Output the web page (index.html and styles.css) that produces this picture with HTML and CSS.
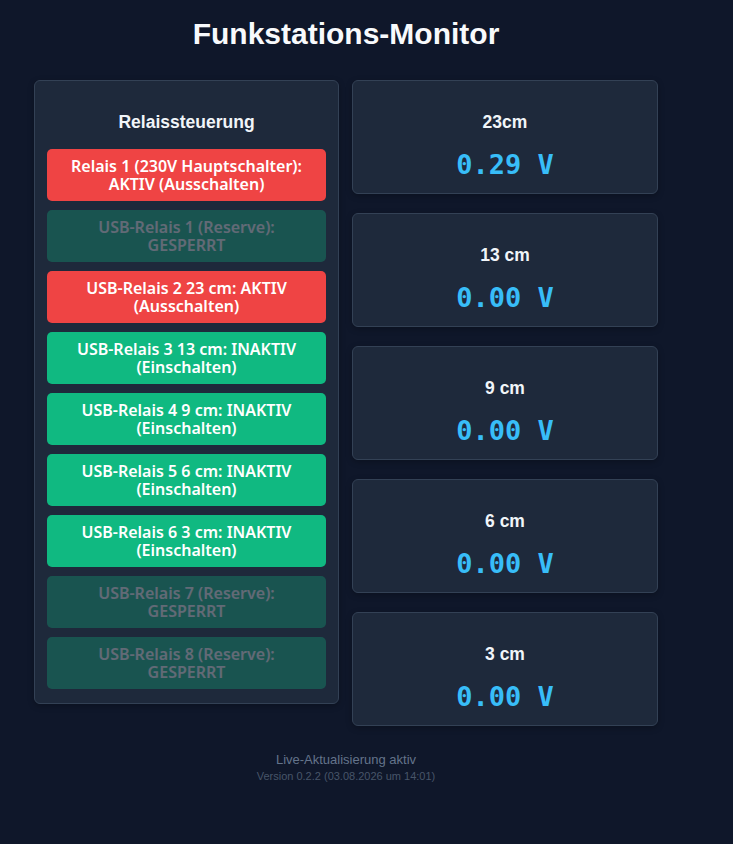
FILE: index.html
```html
<!DOCTYPE html>
<html lang="de">
<head>
<meta charset="utf-8">
<title>Funkstations-Monitor</title>
<link rel="stylesheet" href="styles.css">
</head>
<body>
<div class="page">
  <h1 class="title">Funkstations-Monitor</h1>
  <div class="grid">
    <section class="card relays">
      <h2 class="card-title">Relaissteuerung</h2>
      <div class="btn-list">
        <button class="btn btn-on">Relais 1 (230V Hauptschalter): AKTIV (Ausschalten)</button>
        <button class="btn btn-off btn-locked">USB-Relais 1 (Reserve): GESPERRT</button>
        <button class="btn btn-on">USB-Relais 2 23 cm: AKTIV (Ausschalten)</button>
        <button class="btn btn-off">USB-Relais 3 13 cm: INAKTIV (Einschalten)</button>
        <button class="btn btn-off">USB-Relais 4 9 cm: INAKTIV (Einschalten)</button>
        <button class="btn btn-off">USB-Relais 5 6 cm: INAKTIV (Einschalten)</button>
        <button class="btn btn-off">USB-Relais 6 3 cm: INAKTIV (Einschalten)</button>
        <button class="btn btn-off btn-locked">USB-Relais 7 (Reserve): GESPERRT</button>
        <button class="btn btn-off btn-locked">USB-Relais 8 (Reserve): GESPERRT</button>
      </div>
    </section>
    <div class="meters">
      <section class="card meter"><h2 class="card-title">23cm</h2><div class="value">0.29 V</div></section>
      <section class="card meter"><h2 class="card-title">13 cm</h2><div class="value">0.00 V</div></section>
      <section class="card meter"><h2 class="card-title">9 cm</h2><div class="value">0.00 V</div></section>
      <section class="card meter"><h2 class="card-title">6 cm</h2><div class="value">0.00 V</div></section>
      <section class="card meter"><h2 class="card-title">3 cm</h2><div class="value">0.00 V</div></section>
    </div>
  </div>
  <footer class="footer">
    <div class="live">Live-Aktualisierung aktiv</div>
    <div class="version">Version 0.2.2 (03.08.2026 um 14:01)</div>
  </footer>
</div>
</body>
</html>
```
FILE: styles.css
```css
html, body {
  margin: 0;
  padding: 0;
  background: #0f172a;
  color: #f1f5f9;
  font-family: "Liberation Sans", Arial, sans-serif;
}
.page {
  width: 692px;
  box-sizing: border-box;
  padding: 0 34px;
}
.title {
  margin: 0;
  padding-top: 16px;
  height: 80px;
  box-sizing: border-box;
  text-align: center;
  font-size: 30px;
  line-height: 36px;
  font-weight: 700;
  color: #f8fafc;
}
.grid {
  display: grid;
  grid-template-columns: 305px 306px;
  column-gap: 13px;
  align-items: start;
}
.card {
  background: #1e293b;
  border: 1px solid #334155;
  border-radius: 6px;
  box-sizing: border-box;
  box-shadow: 0 2px 6px rgba(0,0,0,0.25);
}
.relays {
  padding: 12px 12px 14px;
}
.card-title {
  margin: 0;
  text-align: center;
  font-size: 17.5px;
  line-height: 20px;
  font-weight: 700;
  color: #f1f5f9;
}
.relays .card-title {
  margin: 19px 0 17px;
}
.btn-list {
  display: flex;
  flex-direction: column;
  gap: 9px;
}
.btn {
  display: block;
  width: 100%;
  border: none;
  border-radius: 5px;
  padding: 8px 18px;
  font-family: "Noto Sans", "Open Sans", sans-serif;
  font-weight: 600;
  font-size: 16px;
  line-height: 18px;
  color: #ffffff;
  text-align: center;
  cursor: pointer;
}
.btn-on { background: #ef4444; }
.btn-off { background: #10b981; }
.btn-locked { opacity: 0.3; }
.meters {
  display: flex;
  flex-direction: column;
  gap: 19px;
}
.meter {
  height: 114px;
  padding-top: 31px;
  text-align: center;
}
.value {
  margin-top: 18px;
  font-family: "DejaVu Sans Mono", "Liberation Mono", monospace;
  font-weight: 700;
  font-size: 27px;
  line-height: 30px;
  color: #38bdf8;
}
.footer {
  margin-top: 26px;
  text-align: center;
}
.live {
  font-size: 13px;
  line-height: 16px;
  color: #64748b;
}
.version {
  font-size: 11px;
  line-height: 16px;
  color: #475569;
}
```
